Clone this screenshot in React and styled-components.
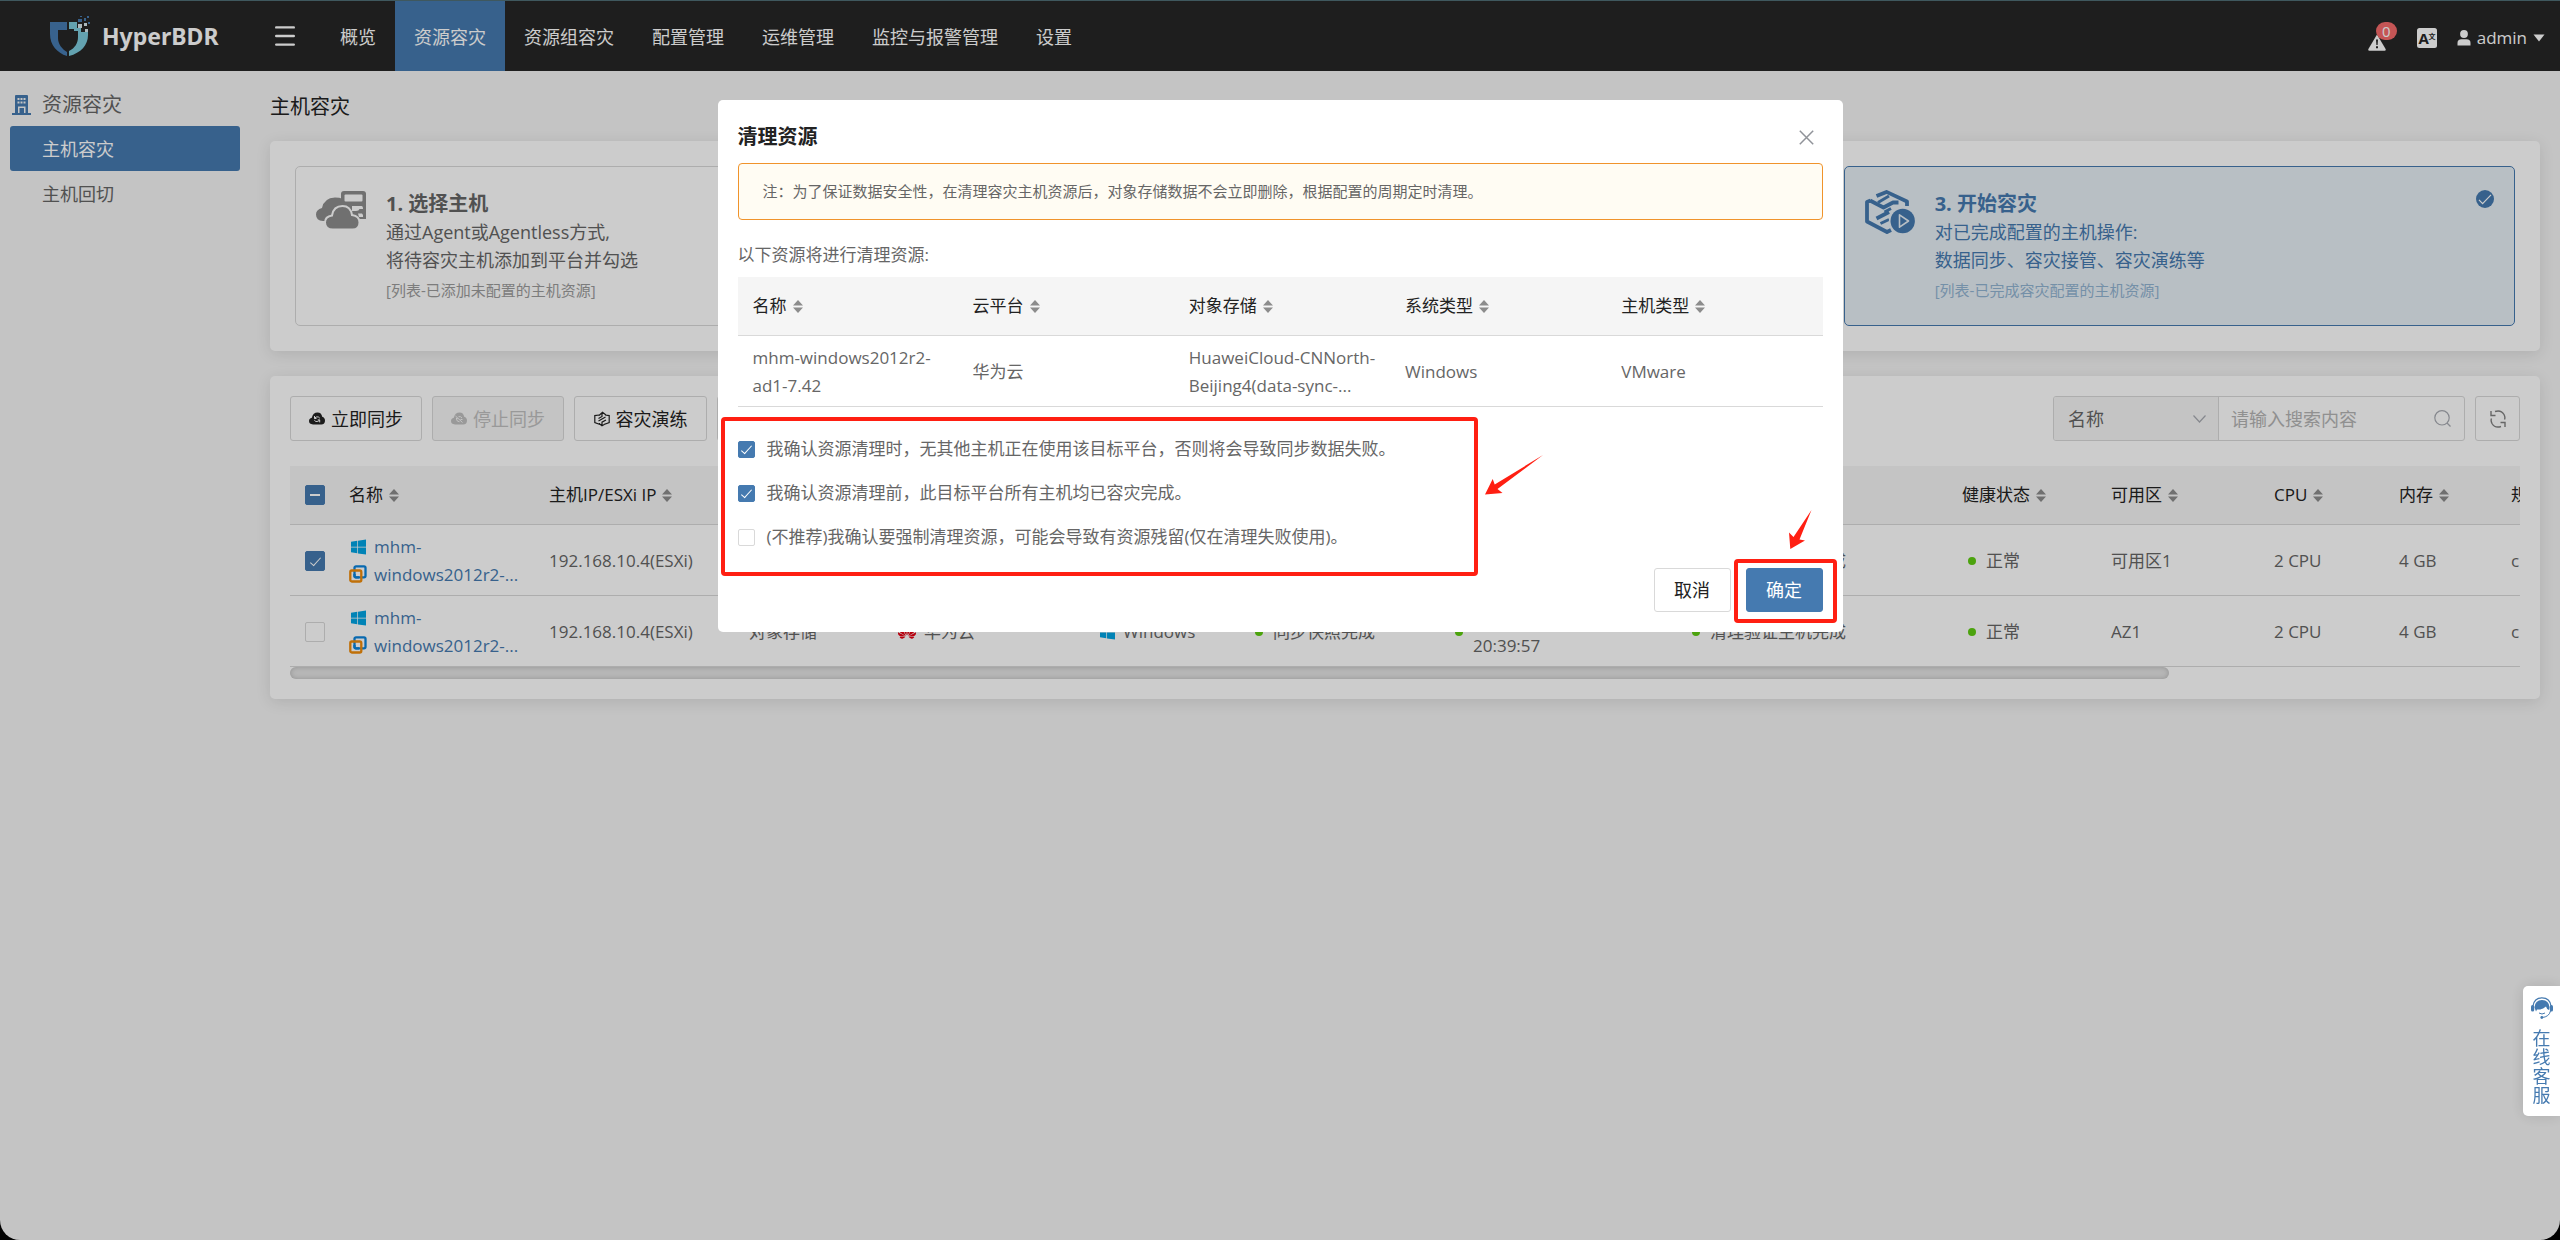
import React, { useState } from "react";
import styled, { createGlobalStyle, css } from "styled-components";
import { SiHuawei } from "react-icons/si";

const c = {
  primary: "#457ab0",
  dark: "#262626",
  page: "#f5f5f5",
  line: "#d9d9d9",
  ink: "#222222",
  text: "#666666",
  mute: "#a8abb2",
  mark: "#ff1f12",
};

const GlobalStyle = createGlobalStyle`
  *, *::before, *::after { box-sizing: border-box; }
  html { background: #000; }
  body {
    margin: 0;
    background: #000;
    font-family: "Open Sans", "Noto Sans CJK SC", sans-serif;
    font-size: 17px;
    line-height: 28px;
    color: ${c.text};
  }
  button, input, select { font: inherit; color: inherit; margin: 0; }
  a { color: inherit; text-decoration: none; }
  svg { display: block; flex: none; }
`;

const Shell = styled.div`
  min-height: 100vh;
  background: ${c.page};
  border-radius: 0 0 20px 20px;
`;

/* ---------- top bar ---------- */
const TopBar = styled.header`
  display: flex;
  align-items: stretch;
  height: 71px;
  background: ${c.dark};
  border-top: 1px solid #4f6e76;
  color: #fff;
  padding-right: 15px;
`;
const Brand = styled.a`
  display: flex;
  align-items: center;
  gap: 10px;
  width: 275px;
  padding-left: 48px;
  font: 700 23px/28px "Noto Sans", sans-serif;
`;
const IconButton = styled.button`
  display: flex;
  align-items: center;
  border: 0;
  padding: 0;
  background: none;
  cursor: pointer;
`;
const Nav = styled.nav`
  display: flex;
  flex: 1;
  padding-left: 26px;
`;
const NavLink = styled.a`
  display: flex;
  align-items: center;
  padding: 1px 19px 0;
  font-size: 18px;
  background: ${(p) => (p.$active ? c.primary : "transparent")};
`;
const Tools = styled.div`
  display: flex;
  align-items: center;
  gap: 20px;
  padding-top: 4px;
`;
const Alarm = styled(IconButton)`
  position: relative;
  width: 29px;
  height: 28px;
  padding-top: 8px;
`;
const Badge = styled.span`
  position: absolute;
  top: -2px;
  right: 0;
  min-width: 21px;
  height: 18px;
  border-radius: 9px;
  background: #f76b6b;
  font-size: 15px;
  line-height: 18px;
  text-align: center;
`;
const User = styled(IconButton)`
  gap: 6px;
  color: #fff;
`;

/* ---------- frame ---------- */
const Body = styled.div`
  display: flex;
`;
const Side = styled.aside`
  width: 250px;
  flex: none;
  padding: 20px 10px;
`;
const SideTitle = styled.h2`
  display: flex;
  align-items: center;
  gap: 11px;
  height: 28px;
  margin: 0 0 7px 2px;
  font-size: 20px;
  font-weight: 400;
  color: ${c.text};
`;
const SideLink = styled.a`
  display: block;
  height: 45px;
  padding-left: 32px;
  line-height: 46px;
  font-size: 18px;
  border-radius: 3px;
  ${(p) =>
    p.$active &&
    css`
      background: ${c.primary};
      color: #fff;
    `}
`;
const Main = styled.main`
  flex: 1;
  min-width: 0;
  padding: 22px 20px 0;
`;
const PageTitle = styled.h1`
  margin: 0 0 20px;
  font-size: 20px;
  line-height: 28px;
  font-weight: 400;
  color: ${c.ink};
`;
const Card = styled.section`
  margin-bottom: 25px;
  padding: ${(p) => p.$pad || "20px"};
  background: #fff;
  border-radius: 5px;
  box-shadow: 0 3px 15px rgba(0, 0, 0, 0.1);
`;

/* ---------- steps ---------- */
const Steps = styled.ol`
  display: grid;
  grid-template-columns: repeat(3, 1fr);
  column-gap: 103px;
  list-style: none;
  margin: 0;
  padding: 0;
`;
const StepBox = styled.li`
  display: flex;
  gap: 20px;
  height: 160px;
  padding: 23px 20px 0;
  border: 1px solid ${(p) => (p.$active ? c.primary : c.line)};
  border-radius: 5px;
  color: ${(p) => (p.$active ? c.primary : c.text)};
  background: ${(p) => (p.$active ? "#e7eff5" : "#fff")};
`;
const StepIcon = styled.div`
  width: 50px;
  color: ${(p) => (p.$active ? c.primary : "#8c8c8c")};
`;
const StepText = styled.div`
  flex: 1;
`;
const StepTitle = styled.h3`
  margin: 0;
  font-size: 20px;
  line-height: 28px;
  font-weight: 700;
`;
const StepLine = styled.p`
  margin: 0;
  font-size: 18px;
  line-height: 28px;
`;
const StepNote = styled.p`
  margin: 0;
  font-size: 15px;
  line-height: 32px;
  color: ${(p) => (p.$active ? "#92b4d2" : "#9c9c9c")};
`;

/* ---------- list ---------- */
const Toolbar = styled.div`
  display: flex;
  gap: 10px;
  margin-bottom: 25px;
`;
const Button = styled.button`
  display: flex;
  align-items: center;
  justify-content: center;
  gap: 6px;
  height: ${(p) => p.$h || 45}px;
  min-width: ${(p) => p.$w || 132}px;
  padding: 0;
  border: 1px solid ${(p) => (p.$primary ? c.primary : c.line)};
  border-radius: 3px;
  background: ${(p) => (p.$primary ? c.primary : "#fff")};
  color: ${(p) => (p.$primary ? "#fff" : c.ink)};
  font-size: 18px;
  &:disabled {
    background: ${c.page};
    color: #c0c0c0;
  }
`;
const Spacer = styled.div`
  flex: 1;
`;
const Field = styled.div`
  display: flex;
  height: 45px;
  border: 1px solid ${c.line};
  border-radius: 3px;
  overflow: hidden;
`;
const SelectWrap = styled.label`
  display: flex;
  align-items: center;
  width: 165px;
  padding-right: 12px;
  background: ${c.page};
  border-right: 1px solid ${c.line};
  color: ${c.mute};
`;
const Select = styled.select`
  flex: 1;
  height: 43px;
  padding: 0 0 0 14px;
  appearance: none;
  border: 0;
  background: none;
  color: ${c.text};
  font-size: 18px;
`;
const SearchWrap = styled.label`
  display: flex;
  align-items: center;
  width: 245px;
  padding: 0 13px 0 12px;
  color: ${c.mute};
`;
const SearchInput = styled.input`
  flex: 1;
  min-width: 0;
  padding: 0;
  border: 0;
  background: none;
  outline: 0;
  font-size: 18px;
  &::placeholder {
    color: #b4b4b4;
    opacity: 1;
  }
`;
const TableClip = styled.div`
  overflow: hidden;
`;
const Table = styled.table`
  width: ${(p) => p.$w};
  table-layout: fixed;
  border-collapse: separate;
  border-spacing: 0;
`;
const Th = styled.th`
  height: 59px;
  padding: 0 0 0 15px;
  background: #f5f5f5;
  border-bottom: 1px solid ${c.line};
  text-align: left;
  font-weight: 400;
  white-space: nowrap;
  color: ${c.ink};
`;
const Td = styled.td`
  height: 71px;
  padding: 2px 0 0 15px;
  border-bottom: 1px solid ${c.line};
  white-space: nowrap;
`;
const Head = styled.span`
  display: flex;
  align-items: center;
  gap: 6px;
`;
const Inline = styled.span`
  display: flex;
  align-items: center;
  gap: ${(p) => p.$gap || 10}px;
`;
const IconStack = styled.span`
  display: grid;
  justify-items: center;
  gap: 10px;
`;
const HostLink = styled.a`
  color: ${c.primary};
`;
const Dot = styled.i`
  width: 8px;
  height: 8px;
  margin-left: 6px;
  border-radius: 50%;
  background: #60cc12;
`;
const ScrollThumb = styled.div`
  width: calc(100% * 2230 / 2646);
  height: 12px;
  border-radius: 6px;
  background: #e4e4e4;
  box-shadow: inset 0 0 5px rgba(0, 0, 0, 0.2);
`;
const Check = styled.input`
  position: relative;
  display: block;
  flex: none;
  appearance: none;
  width: ${(p) => p.$size || 20}px;
  height: ${(p) => p.$size || 20}px;
  border: 1px solid ${c.line};
  border-radius: 2px;
  background: #fff;
  &:checked,
  &:indeterminate {
    border-color: ${c.primary};
    background: ${c.primary};
  }
  &:checked::after,
  &:indeterminate::after {
    content: "";
    position: absolute;
    inset: 0;
    margin: auto;
  }
  &:checked::after {
    width: 5px;
    height: 11px;
    border: solid #fff;
    border-width: 0 1px 1px 0;
    transform: translateY(-1px) rotate(42deg);
  }
  &:indeterminate::after {
    width: 10px;
    height: 2px;
    background: #fff;
  }
`;

/* ---------- dialog ---------- */
const Mask = styled.div`
  position: fixed;
  inset: 0;
  display: flex;
  align-items: flex-start;
  justify-content: center;
  padding-top: 100px;
  background: rgba(0, 0, 0, 0.2);
`;
const Dialog = styled.div`
  width: 1125px;
  padding: 20px;
  background: #fff;
  border-radius: 5px;
`;
const DialogHead = styled.div`
  display: flex;
  align-items: center;
  justify-content: space-between;
  height: 34px;
  margin-bottom: 9px;
  padding-right: 9px;
`;
const DialogTitle = styled.h2`
  margin: 0;
  font-size: 20px;
  line-height: 34px;
  font-weight: 700;
  color: ${c.ink};
`;
const Notice = styled.p`
  height: 57px;
  margin: 0 0 21px;
  padding-left: 24px;
  border: 1px solid #f0932b;
  border-radius: 4px;
  background: #fffcf3;
  font-size: 15px;
  line-height: 54px;
`;
const Lead = styled.p`
  margin: 0 0 8px;
`;
const Marked = styled.div`
  position: relative;
  &::after {
    content: "";
    position: absolute;
    inset: ${(p) => p.$inset};
    border: 4px solid ${c.mark};
    border-radius: 4px;
    pointer-events: none;
  }
`;
const Acks = styled(Marked)`
  display: grid;
  justify-items: start;
  gap: 16px;
  margin-top: 28px;
`;
const Ack = styled.label`
  display: flex;
  align-items: center;
  gap: 12px;
`;
const Arrow = styled.svg`
  position: absolute;
  left: ${(p) => p.$x}px;
  top: ${(p) => p.$y}px;
  fill: ${c.mark};
`;
const DialogFoot = styled.div`
  display: flex;
  justify-content: flex-end;
  gap: 15px;
  margin-top: 17px;
`;
const Service = styled.a`
  position: fixed;
  right: 0;
  top: 986px;
  display: flex;
  flex-direction: column;
  align-items: center;
  gap: 10px;
  width: 37px;
  height: 130px;
  padding: 11px 7px 0;
  background: #fff;
  border-radius: 5px 0 0 5px;
  box-shadow: 0 0 15px rgba(0, 0, 0, 0.12);
  color: ${c.primary};
  font-size: 18px;
  line-height: 19px;
  text-align: center;
  span {
    width: 18px;
    word-break: break-all;
  }
`;

/* ---------- drawings ---------- */
const Logo = () => (
  <svg width="44" height="40" viewBox="0 0 44 40">
    <path d="M2 6h17v8h-9v8c0 6 4 11 9 14v4C9 37 2 29 2 18z" fill="#467bb1" />
    <path d="M21 6h8v6h4v4h7v3c0 10-7 18-19 21v-5c6-3 9-8 9-14v-6h-4v-2h-5z" fill="#7ccbdd" />
    <path d="M30 8h4v4h-4zM37 13h3v3h-3zM36 7h3v3h-3z" fill="#d8e8ee" />
    <path d="M30 3h4v3h-4zM36 2h2v3h-2zM39 0h2v2h-2zM40 6h2v2h-2zM32 0h2v1h-2z" fill="#467bb1" />
  </svg>
);
const MenuIcon = () => (
  <svg width="20" height="20" viewBox="0 0 20 20" stroke="#fff" strokeWidth="2.4" strokeLinecap="round">
    <path d="M1.2 1.4h17.6M1.2 10h17.6M1.2 18.6h17.6" />
  </svg>
);
const WarnIcon = () => (
  <svg width="18" height="17" viewBox="0 0 18 17">
    <path d="M9 .5 17.6 15q.6 1.600-1 1.700H1.400q-1.600-.1-1-1.700z" fill="#fff" />
    <path d="M8 5.500h2l-.4 5.600H8.400zM8 12.300h2v2H8z" fill={c.dark} />
  </svg>
);
const LangIcon = () => (
  <svg width="20" height="20" viewBox="0 0 20 20">
    <rect width="20" height="20" rx="2.500" fill="#fff" />
    <text x="1.500" y="16" fontSize="15" fontWeight="700" fill={c.dark}>A</text>
    <text x="11.500" y="10.500" fontSize="7" fontWeight="700" fill={c.dark}>文</text>
  </svg>
);
const UserIcon = () => (
  <svg width="14" height="16" viewBox="0 0 14 16" fill="#fff">
    <circle cx="7" cy="4" r="3.900" />
    <path d="M.5 15.500v-2.500q0-3.700 4-3.700h5q4 0 4 3.700v2.500z" />
  </svg>
);
const Caret = () => (
  <svg width="12" height="8" viewBox="0 0 12 8" fill="#fff">
    <path d="M.5.500h11L6 7.500z" />
  </svg>
);
const Building = () => (
  <svg width="19" height="20" viewBox="0 0 19 20">
    <path d="M4 0h11q1 0 1 1v17h3v2H0v-2h3V1q0-1 1-1z" fill={c.primary} />
    <path
      d="M5.500 3h2v2h-2zM8.500 3h2v2h-2zM11.500 3h2v2h-2zM5.500 6.500h2v2h-2zM8.500 6.500h2v2h-2zM11.500 6.500h2v2h-2zM6 11.500h7.500V18h-1.500v-5H7.500v5H6z"
      fill={c.page}
    />
  </svg>
);
const CloudServer = () => (
  <svg width="50" height="40" viewBox="0 -1 50 40">
    <path d="M28 0h19q3 0 3 3v25H25V3q0-3 3-3z" fill="currentColor" />
    <rect x="28.500" y="3.500" width="18" height="7" rx="1" fill="#fff" />
    <path d="M36 15h9.500q1.500 0 1.500 3h-3.500q-.5 2-3.500 2h-4zM42 22.500h4q1.500 1 1 3.500h-4z" fill="#fff" />
    <path d="M7 30q-7-.5-7-6.500 0-5 6-6.500Q8 7 19 6.500q5 0 6 1V22l-8 8z" fill="currentColor" />
    <path
      d="M16 38.500q-8 0-8-7 0-6 7-7 1.500-9.500 10.500-9.500 8 0 9.500 9 7.500 1 7.500 7.500 0 7-7 7z"
      transform="translate(1 0)"
      fill="currentColor"
      stroke="#fff"
      strokeWidth="2"
    />
  </svg>
);
const BoxPlay = () => (
  <svg width="50" height="44" viewBox="0 0 50 44">
    <g fill="none" stroke="currentColor" strokeWidth="3.800" strokeLinejoin="round">
      <path d="M11.500 6 21.500 1.900 42 11.500v4.500" />
      <path d="M13 12.500 24 6" strokeWidth="3" />
      <path d="M5 10.500 18.500 17.500 28 12.500h5.500" />
      <path d="M5.500 10.500 2 12v19.500L22 42l4-2" />
      <path d="M11.500 28.500 24 22" />
      <path d="M15.500 33.500 24 29.500" strokeWidth="3" />
      <path d="M19.500 22 26 18.500" strokeWidth="3" />
    </g>
    <circle cx="37.700" cy="31" r="13.800" fill="#e7eff5" />
    <circle cx="37.700" cy="31" r="12.200" fill="currentColor" />
    <path d="M34.500 24.800 43.500 31l-9 6.200z" fill="none" stroke="#e7eff5" strokeWidth="1.600" strokeLinejoin="round" />
  </svg>
);
const Tick = () => (
  <svg width="18" height="18" viewBox="0 0 18 18">
    <circle cx="9" cy="9" r="9" fill={c.primary} />
    <path d="m3 9.800 3.600 3.800L15 4.800" fill="none" stroke="#fff" strokeWidth="1.200" />
  </svg>
);
const CLOUD = "M4 12.500q-4-.2-4-3.400 0-2.700 2.800-3.300Q4 .5 8.500.500q4 0 4.700 4.300 2.800.8 2.800 3.900 0 3.600-3.800 3.800z";
const CloudSync = () => (
  <svg width="16" height="13" viewBox="0 0 16 13">
    <path d={CLOUD} fill="currentColor" />
    <path d="M10.800 6.200q-1.300-2-3.600-1.200L5.500 6.300M5.300 8.200q1.300 2 3.600 1.200l1.700-1.300M5.500 4v2.500h2M10.700 10.400V7.900h-2" fill="none" stroke="#fff" strokeWidth="1" />
  </svg>
);
const CloudStop = () => (
  <svg width="16" height="13" viewBox="0 0 16 13">
    <path d={CLOUD} fill="currentColor" />
    <path d="m4.500 4 7 6.500M11 6q-1.500-2-3.500-1.300M5.500 7q0 2.500 3 2.800M5 6.500h1.600M9.500 7.500h2" fill="none" stroke="#f5f5f5" strokeWidth="1" />
  </svg>
);
const Drill = () => (
  <svg width="16" height="16" viewBox="0 0 16 16" fill="none" stroke="currentColor" strokeWidth="1.200">
    <path d="M5 4 .8 4.600v7L6 13.500M11 4l4.200.600v7L10 13.500M5 4.500 8.500 1.200 12 4M8 1.500v4L4.500 7.500M4.500 10 8 8l3.500-2M12 9 8 11.200v3.600M5 12.500l3 2.300 3.500-2" />
  </svg>
);
const WinIcon = () => (
  <svg width="15" height="16" viewBox="0 0 16 16" fill="#00a4e4">
    <path d="M0 2.300 6.700 1.300v6.300H0zM7.500 1.200 16 0v7.600H7.500zM0 8.400h6.700v6.300L0 13.700zM7.500 8.400H16V16l-8.500-1.200z" />
  </svg>
);
const VmIcon = () => (
  <svg width="18" height="18" viewBox="0 0 18 18" fill="none" strokeWidth="2.300">
    <rect x="5.500" y="1.300" width="11" height="11" rx="1.500" stroke="#0a84dc" />
    <rect x="1.300" y="5.500" width="11" height="11" rx="1.500" stroke="#f08c0a" />
    <path d="M5.500 9v2q0 1.300 1.500 1.300h3" stroke="#0a84dc" />
  </svg>
);
const Sort = () => (
  <svg width="10" height="13" viewBox="0 0 10 13" fill="#8c8c8c">
    <path d="M5 0l5 5.500H0zM0 7.500h10L5 13z" />
  </svg>
);
const ChevronDown = () => (
  <svg width="13" height="8" viewBox="0 0 13 8" fill="none" stroke="currentColor" strokeWidth="1.200">
    <path d="m.5.500 6 6.500 6-6.500" />
  </svg>
);
const SearchIcon = () => (
  <svg width="17" height="17" viewBox="0 0 17 17" fill="none" stroke="currentColor" strokeWidth="1.200">
    <circle cx="8" cy="7.800" r="7.200" />
    <path d="m13 13 3.500 3.500" />
  </svg>
);
const RefreshIcon = () => (
  <svg width="18" height="18" viewBox="0 0 18 18" fill="none" stroke="#808080" strokeWidth="1.400">
    <path d="M6 1.500q6-2 9 3 1.500 3 .5 5M12 16.500q-6 2-9-3-1.500-3-.5-5" />
    <path d="M6.500 5.500H2V1M11.500 12.500H16V17" />
  </svg>
);
const CloseIcon = () => (
  <svg width="15" height="15" viewBox="0 0 15 15" stroke="#909399" strokeWidth="1.500">
    <path d="m.8.800 13.400 13.400M14.200.800.800 14.200" />
  </svg>
);
const AgentIcon = () => (
  <svg width="22" height="22" viewBox="0 0 22 22">
    <path d="M2 9Q3 .8 11 .8T20 9" fill="none" stroke="currentColor" strokeWidth="1.200" />
    <path d="M3.500 10.500Q4 3 11 3t7.500 7.500L18 13q-2.500-1-3-3.500-4 3.500-9 3l-1 2z" fill="currentColor" />
    <rect x="0" y="8" width="3.200" height="6.500" rx="1.500" fill="currentColor" />
    <rect x="18.800" y="8" width="3.200" height="6.500" rx="1.500" fill="currentColor" />
    <path d="M19.500 14q-1.500 6-8.500 6.500M8 16q3 2 6 0" fill="none" stroke="currentColor" strokeWidth="1" />
    <circle cx="10.800" cy="20.500" r="1.400" fill="currentColor" />
  </svg>
);

/* ---------- data ---------- */
const navItems = ["概览", "资源容灾", "资源组容灾", "配置管理", "运维管理", "监控与报警管理", "设置"];
const colWidths = [44, 200, 200, 149, 202, 149, 200, 237, 276, 149, 163, 125, 112, 440];
const heads = ["主机IP/ESXi IP", "", "", "", "", "", "", "健康状态", "可用区", "CPU", "内存", "规格"];
const hosts = [
  { id: "a", checked: true, zone: "可用区1" },
  { id: "b", checked: false, zone: "AZ1" },
];
const acks = [
  ["我确认资源清理时，无其他主机正在使用该目标平台，否则将会导致同步数据失败。", true],
  ["我确认资源清理前，此目标平台所有主机均已容灾完成。", true],
  ["(不推荐)我确认要强制清理资源，可能会导致有资源残留(仅在清理失败使用)。", false],
];

const SortHead = ({ label }) =>
  label ? (
    <Head>
      {label}
      <Sort />
    </Head>
  ) : null;

function Step({ active, icon, title, lines = [], note }) {
  return (
    <StepBox $active={active}>
      <StepIcon $active={active}>{icon}</StepIcon>
      <StepText>
        {title && <StepTitle>{title}</StepTitle>}
        {lines.map((l) => (
          <StepLine key={l}>{l}</StepLine>
        ))}
        {note && <StepNote $active={active}>{note}</StepNote>}
      </StepText>
      {active && <Tick />}
    </StepBox>
  );
}

function HostRow({ host }) {
  const [on, setOn] = useState(host.checked);
  return (
    <tr>
      <Td>
        <Check type="checkbox" aria-label="选择主机" checked={on} onChange={() => setOn(!on)} />
      </Td>
      <Td>
        <Inline $gap={7}>
          <IconStack>
            <WinIcon />
            <VmIcon />
          </IconStack>
          <HostLink href="#host">
            mhm-
            <br />
            windows2012r2-...
          </HostLink>
        </Inline>
      </Td>
      <Td>192.168.10.4(ESXi)</Td>
      <Td>对象存储</Td>
      <Td>
        <Inline $gap={8}>
          <SiHuawei size={18} color="#e60012" />
          华为云
        </Inline>
      </Td>
      <Td>
        <Inline $gap={8}>
          <WinIcon />
          Windows
        </Inline>
      </Td>
      <Td>
        <Inline>
          <Dot />
          同步快照完成
        </Inline>
      </Td>
      <Td>
        <Inline>
          <Dot />
          <span>
            &nbsp;
            <br />
            20:39:57
          </span>
        </Inline>
      </Td>
      <Td>
        <Inline>
          <Dot />
          清理验证主机完成
        </Inline>
      </Td>
      <Td>
        <Inline>
          <Dot />
          正常
        </Inline>
      </Td>
      <Td>{host.zone}</Td>
      <Td>2 CPU</Td>
      <Td>4 GB</Td>
      <Td>c</Td>
    </tr>
  );
}

function CleanDialog() {
  const [state, setState] = useState(acks.map((a) => a[1]));
  return (
    <Mask>
      <Dialog role="dialog" aria-labelledby="dlg-title">
        <DialogHead>
          <DialogTitle id="dlg-title">清理资源</DialogTitle>
          <IconButton aria-label="关闭">
            <CloseIcon />
          </IconButton>
        </DialogHead>
        <Notice>注：为了保证数据安全性，在清理容灾主机资源后，对象存储数据不会立即删除，根据配置的周期定时清理。</Notice>
        <Lead>以下资源将进行清理资源:</Lead>
        <Table $w="100%">
          <colgroup>
            <col style={{ width: 220 }} />
            <col span={4} />
          </colgroup>
          <thead>
            <tr>
              {["名称", "云平台", "对象存储", "系统类型", "主机类型"].map((h) => (
                <Th key={h}>
                  <SortHead label={h} />
                </Th>
              ))}
            </tr>
          </thead>
          <tbody>
            <tr>
              <Td>
                mhm-windows2012r2-
                <br />
                ad1-7.42
              </Td>
              <Td>华为云</Td>
              <Td>
                HuaweiCloud-CNNorth-
                <br />
                Beijing4(data-sync-...
              </Td>
              <Td>Windows</Td>
              <Td>VMware</Td>
            </tr>
          </tbody>
        </Table>
        <Acks $inset="-18px 345px -25px -17px">
          {acks.map(([label], i) => (
            <Ack key={label}>
              <Check
                type="checkbox"
                $size={17}
                checked={state[i]}
                onChange={() => setState(state.map((v, j) => (j === i ? !v : v)))}
              />
              {label}
            </Ack>
          ))}
          <Arrow $x={747} $y={20} width="58" height="40" viewBox="0 0 58 40">
            <path d="M0 39.500 7.700 24l2 5.500L58 0 12.500 34l5 4z" />
          </Arrow>
        </Acks>
        <DialogFoot>
          <Button $w={77} $h={44}>
            取消
          </Button>
          <Marked $inset="-9px -14px -11px -12px">
            <Button $primary $w={77} $h={44}>
              确定
            </Button>
            <Arrow $x={43} $y={-58} width="23" height="40" viewBox="0 0 23 40">
              <path d="M1.300 39 0 22.500l4.500 4.500L22.500 0 10.500 29.500l5.500 1z" />
            </Arrow>
          </Marked>
        </DialogFoot>
      </Dialog>
    </Mask>
  );
}

export default function App() {
  return (
    <>
      <GlobalStyle />
      <Shell>
        <TopBar>
          <Brand href="#home">
            <Logo />
            HyperBDR
          </Brand>
          <IconButton aria-label="菜单">
            <MenuIcon />
          </IconButton>
          <Nav>
            {navItems.map((n) => (
              <NavLink key={n} href="#nav" $active={n === "资源容灾"}>
                {n}
              </NavLink>
            ))}
          </Nav>
          <Tools>
            <Alarm aria-label="报警">
              <WarnIcon />
              <Badge>0</Badge>
            </Alarm>
            <IconButton aria-label="语言">
              <LangIcon />
            </IconButton>
            <User>
              <UserIcon />
              admin
              <Caret />
            </User>
          </Tools>
        </TopBar>
        <Body>
          <Side>
            <SideTitle>
              <Building />
              资源容灾
            </SideTitle>
            <SideLink href="#dr" $active>
              主机容灾
            </SideLink>
            <SideLink href="#failback">主机回切</SideLink>
          </Side>
          <Main>
            <PageTitle>主机容灾</PageTitle>
            <Card $pad="25px">
              <Steps>
                <Step
                  icon={<CloudServer />}
                  title="1. 选择主机"
                  lines={["通过Agent或Agentless方式,", "将待容灾主机添加到平台并勾选"]}
                  note="[列表-已添加未配置的主机资源]"
                />
                <Step />
                <Step
                  active
                  icon={<BoxPlay />}
                  title="3. 开始容灾"
                  lines={["对已完成配置的主机操作:", "数据同步、容灾接管、容灾演练等"]}
                  note="[列表-已完成容灾配置的主机资源]"
                />
              </Steps>
            </Card>
            <Card>
              <Toolbar>
                <Button>
                  <CloudSync />
                  立即同步
                </Button>
                <Button disabled>
                  <CloudStop />
                  停止同步
                </Button>
                <Button $w={133}>
                  <Drill />
                  容灾演练
                </Button>
                <Button aria-label="更多" />
                <Spacer />
                <Field>
                  <SelectWrap>
                    <Select aria-label="搜索字段" defaultValue="name">
                      <option value="name">名称</option>
                    </Select>
                    <ChevronDown />
                  </SelectWrap>
                  <SearchWrap>
                    <SearchInput aria-label="搜索" placeholder="请输入搜索内容" />
                    <SearchIcon />
                  </SearchWrap>
                </Field>
                <Button aria-label="刷新" $w={45}>
                  <RefreshIcon />
                </Button>
              </Toolbar>
              <TableClip>
                <Table $w="2646px">
                  <colgroup>
                    {colWidths.map((w, i) => (
                      <col key={i} style={{ width: w }} />
                    ))}
                  </colgroup>
                  <thead>
                    <tr>
                      <Th>
                        <Check
                          type="checkbox"
                          aria-label="全选"
                          ref={(el) => {
                            if (el) el.indeterminate = true;
                          }}
                        />
                      </Th>
                      <Th>
                        <SortHead label="名称" />
                      </Th>
                      {heads.map((h, i) => (
                        <Th key={i}>
                          <SortHead label={h} />
                        </Th>
                      ))}
                    </tr>
                  </thead>
                  <tbody>
                    {hosts.map((h) => (
                      <HostRow key={h.id} host={h} />
                    ))}
                  </tbody>
                </Table>
              </TableClip>
              <ScrollThumb />
            </Card>
          </Main>
        </Body>
      </Shell>
      <CleanDialog />
      <Service href="#service">
        <AgentIcon />
        <span>在线客服</span>
      </Service>
    </>
  );
}
